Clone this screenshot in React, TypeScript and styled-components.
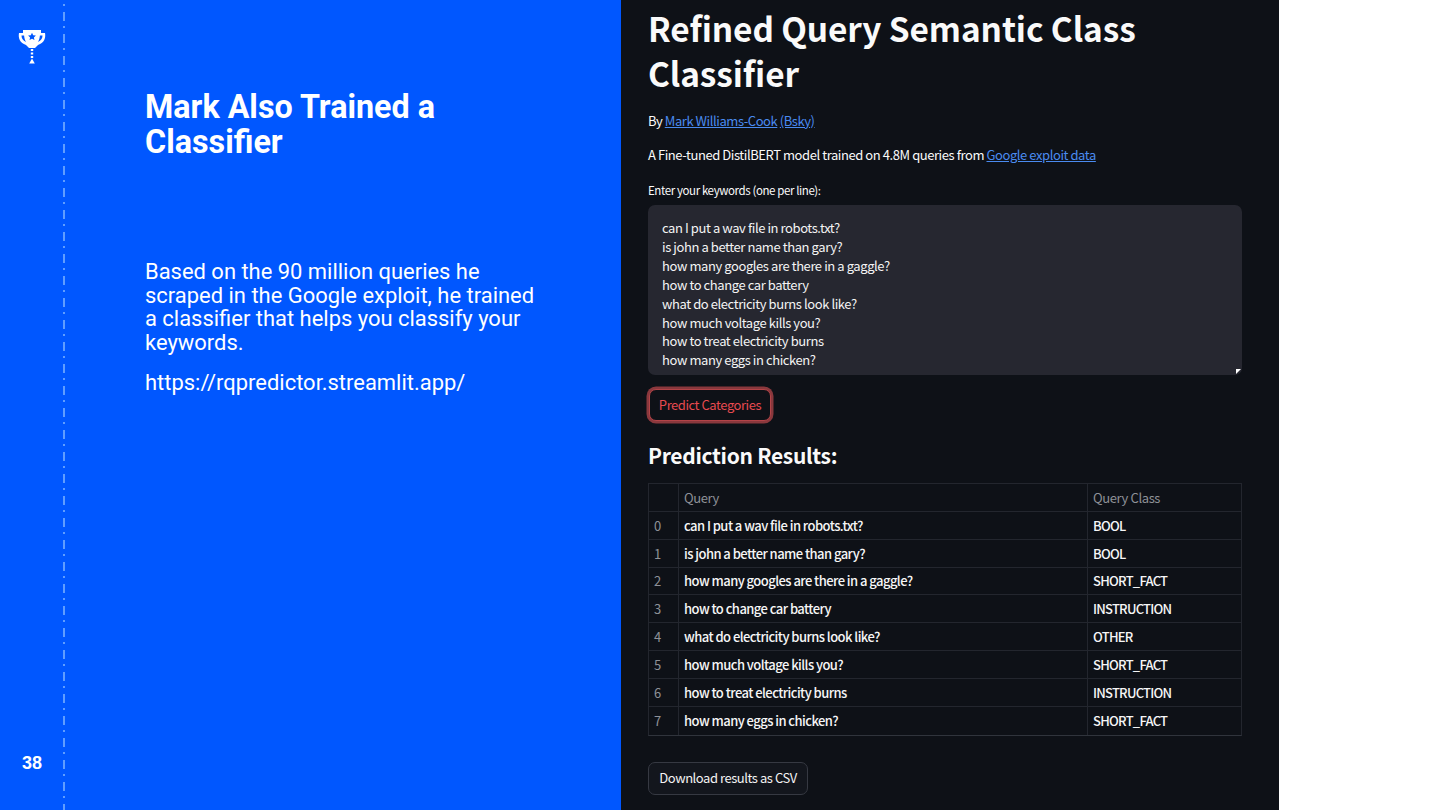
import React from "react";
import styled, { createGlobalStyle } from "styled-components";

const Global = createGlobalStyle`
  html, body { margin: 0; padding: 0; background: #fff; }
  body { width: 1440px; height: 810px; overflow: hidden; }
`;
const Slide = styled.div`
  width: 1440px; height: 810px; display: flex; background: #fff; overflow: hidden;
`;
const BluePanel = styled.section`
  width: 621px; flex: none; height: 810px; display: flex; background: #0057ff; color: #fff;
  font-family: Roboto, sans-serif;
`;
const Rail = styled.aside`
  width: 65px; flex: none; box-sizing: border-box; height: 810px; display: flex; flex-direction: column;
  align-items: flex-start; justify-content: space-between; padding: 29px 0 36px 18px;
  background: repeating-linear-gradient(to bottom,
    #5f9dff 0, #5f9dff 2px, transparent 2px, transparent 8px,
    #5f9dff 8px, #5f9dff 17px, transparent 17px, transparent 22px)
    63px 4px / 2px 100% no-repeat;
`;
const PageNumber = styled.div`
  font-family: "Liberation Sans", Arial, sans-serif; font-weight: 700; font-size: 18px; line-height: 22px;
  margin-left: 4px;
`;
const Copy = styled.div`
  flex: 1; padding: 90px 80px 0 80px; min-width: 0;
`;
const Title = styled.h1`
  margin: 0 0 100px; font-size: 32.3px; line-height: 35px; font-weight: 700;
`;
const Para = styled.p`
  margin: 0 0 17px; font-size: 21.95px; line-height: 23.5px; font-weight: 400;
`;
const Shot = styled.section`
  width: 658px; flex: none; height: 810px; box-sizing: border-box; background: #0e1117; color: #fafafa;
  padding: 5px 37px 0 27px; font-family: "Noto Sans CJK SC", "Noto Sans", sans-serif;
`;
const ShotTitle = styled.h2`
  margin: 0 0 16px; font-size: 33.4px; line-height: 45px; font-weight: 700; letter-spacing: -0.1px;
`;
const Line = styled.p<{ $gap: number }>`
  margin: 0 0 ${(p) => p.$gap}px; font-size: 13px; line-height: 20px; letter-spacing: -0.43px;
`;
const Link = styled.a`
  color: #4a8bf0; text-decoration: underline;
`;
const Label = styled.div`
  font-size: 11.5px; line-height: 16px; margin-bottom: 7px; letter-spacing: -0.4px;
`;
const TextArea = styled.div`
  position: relative; height: 170px; width: 594px; box-sizing: border-box; background: #262730;
  border-radius: 7px; padding: 14px 14px 0; font-size: 13px; line-height: 18.9px; letter-spacing: -0.42px; color: #f4f4f4;
`;
const Grip = styled.span`
  position: absolute; right: 1px; bottom: 1px; width: 0; height: 0;
  border-bottom: 5px solid #fff; border-left: 5px solid transparent; transform: rotate(180deg) scaleX(-1) rotate(90deg);
`;
const PredictButton = styled.button`
  display: block; margin: 14px 0 0 1px; height: 32px; width: 122px; box-sizing: border-box; padding: 0 0 2px; background: #0e1117;
  border: 1px solid #b34448; border-radius: 7px; box-shadow: 0 0 0 2.5px #8a383d;
  color: #e64a50; font: 400 13px "Noto Sans CJK SC", sans-serif; letter-spacing: -0.45px;
`;
const SubTitle = styled.h3`
  margin: 18px 0 12px; font-size: 21px; line-height: 32px; font-weight: 700; letter-spacing: -0.3px;
`;
const Table = styled.div`
  width: 594px; border: 1px solid #23262e; border-bottom-color: #30343c; box-sizing: border-box;
  display: grid; grid-template-columns: 30px 409px 1fr; grid-auto-rows: 27.85px;
  font-size: 13px; letter-spacing: -0.39px;
`;
const Cell = styled.div<{ $muted?: boolean; $last?: boolean; $end?: boolean }>`
  display: flex; align-items: center; padding: 0 5px; box-sizing: border-box; min-width: 0; white-space: nowrap;
  color: ${(p) => (p.$muted ? "#8f9197" : "#f6f6f6")};
  font-weight: ${(p) => (p.$muted ? 400 : 500)};
  letter-spacing: ${(p) => (p.$muted ? "inherit" : p.$end ? "-0.75px" : "-0.55px")};
  border-right: ${(p) => (p.$end ? "none" : "1px solid #23262e")};
  border-bottom: ${(p) => (p.$last ? "none" : "1px solid #23262e")};
`;
const DownloadButton = styled.button`
  display: block; margin: 26.35px 0 0; height: 33px; width: 160px; box-sizing: border-box; padding: 0 0 2px;
  background: #13161d; border: 1px solid #363942; border-radius: 7px; color: #f3f3f3;
  font: 400 13px "Noto Sans CJK SC", sans-serif; letter-spacing: -0.45px;
`;
const Blank = styled.div`
  flex: 1;
`;

const Trophy = () => (
  <svg width="28" height="36" viewBox="0 0 28 36" style={{ display: "block" }} aria-hidden>
    <path d="M5 1h18v3h4c1 5-1 10-7 12-1 1-2 2-3 3h-6c-1-1-2-2-3-3C2 14 0 9 1 4h4z" fill="#fff" />
    <path d="M3.500 6.500h2.600c.2 2.500.8 4.700 1.900 6.400C5 11.700 3.400 9.400 3.500 6.500zM24.500 6.500h-2.600c-.2 2.500-.8 4.700-1.900 6.400 3-1.200 4.600-3.500 4.500-6.400z" fill="#0057ff" />
    <path d="M14 3.800l1.200 2.500 2.700.3-2 1.800.6 2.700-2.500-1.400-2.500 1.400.6-2.700-2-1.800 2.700-.3z" fill="#0057ff" />
    <rect x="12.800" y="20" width="2.400" height="2" fill="#fff" />
    <rect x="12.800" y="23.500" width="2.400" height="2" fill="#fff" />
    <rect x="12.800" y="27" width="2.400" height="2" fill="#fff" />
    <path d="M14 29.500l2.800 5h-5.600z" fill="#fff" />
  </svg>
);

const queries = [
  "can I put a wav file in robots.txt?",
  "is john a better name than gary?",
  "how many googles are there in a gaggle?",
  "how to change car battery",
  "what do electricity burns look like?",
  "how much voltage kills you?",
  "how to treat electricity burns",
  "how many eggs in chicken?",
];
const classes = ["BOOL", "BOOL", "SHORT_FACT", "INSTRUCTION", "OTHER", "SHORT_FACT", "INSTRUCTION", "SHORT_FACT"];

export default function App() {
  return (
    <Slide>
      <Global />
      <BluePanel>
        <Rail>
          <Trophy />
          <PageNumber>38</PageNumber>
        </Rail>
        <Copy>
          <Title>Mark Also Trained a Classifier</Title>
          <Para>Based on the 90 million queries he scraped in the Google exploit, he trained a classifier that helps you classify your keywords.</Para>
          <Para>https://rqpredictor.streamlit.app/</Para>
        </Copy>
      </BluePanel>
      <Shot>
        <ShotTitle>Refined Query Semantic Class Classifier</ShotTitle>
        <Line $gap={14}>By <Link>Mark Williams-Cook</Link> <Link>(Bsky)</Link></Line>
        <Line $gap={17}>A Fine-tuned DistilBERT model trained on 4.8M queries from <Link>Google exploit data</Link></Line>
        <Label>Enter your keywords (one per line):</Label>
        <TextArea>
          {queries.map((q) => <div key={q}>{q}</div>)}
          <Grip />
        </TextArea>
        <PredictButton>Predict Categories</PredictButton>
        <SubTitle>Prediction Results:</SubTitle>
        <Table>
          <Cell />
          <Cell $muted>Query</Cell>
          <Cell $muted $end>Query Class</Cell>
          {queries.map((q, i) => (
            <React.Fragment key={q}>
              <Cell $muted $last={i === 7}>{i}</Cell>
              <Cell $last={i === 7}>{q}</Cell>
              <Cell $last={i === 7} $end>{classes[i]}</Cell>
            </React.Fragment>
          ))}
        </Table>
        <DownloadButton>Download results as CSV</DownloadButton>
      </Shot>
      <Blank />
    </Slide>
  );
}
